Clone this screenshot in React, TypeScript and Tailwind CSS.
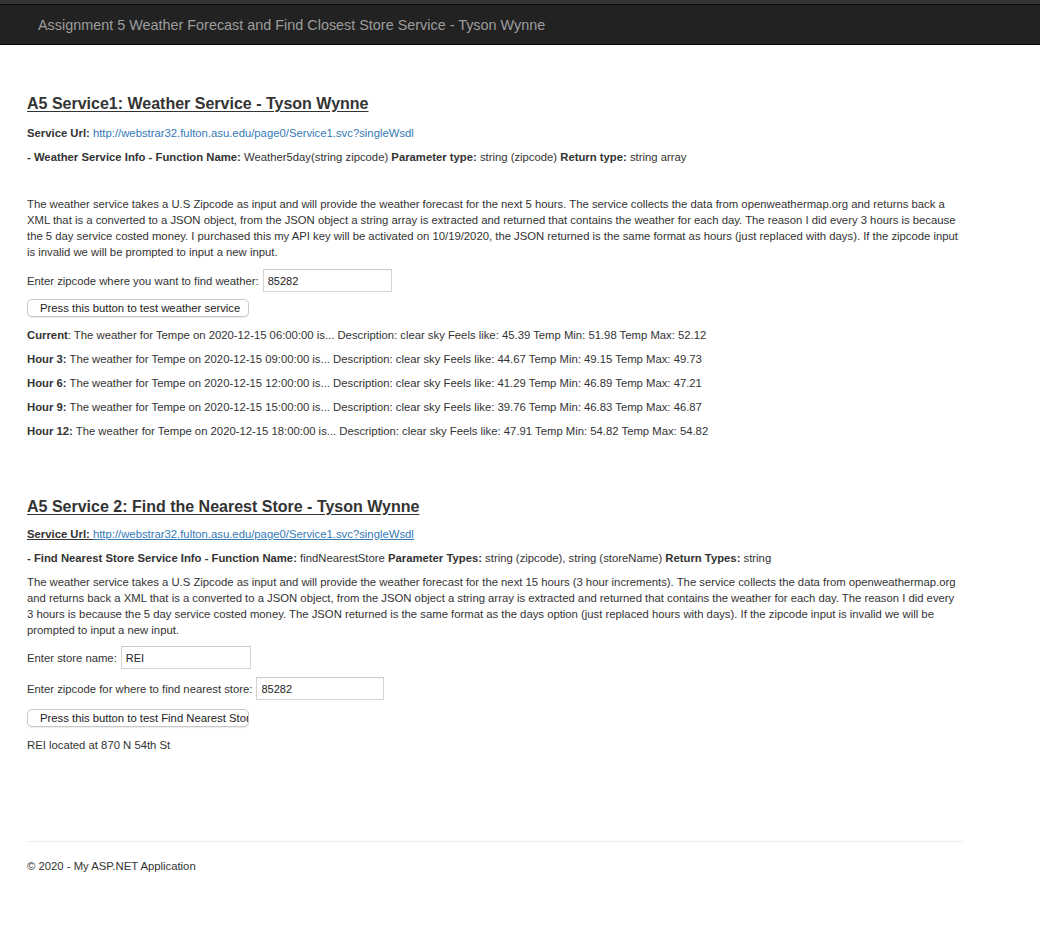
import React from "react";

const url = "http://webstrar32.fulton.asu.edu/page0/Service1.svc?singleWsdl";

const forecast = [
  { label: "Current", colon: false, time: "06:00:00", feels: "45.39", min: "51.98", max: "52.12" },
  { label: "Hour 3:", colon: true, time: "09:00:00", feels: "44.67", min: "49.15", max: "49.73" },
  { label: "Hour 6:", colon: true, time: "12:00:00", feels: "41.29", min: "46.89", max: "47.21" },
  { label: "Hour 9:", colon: true, time: "15:00:00", feels: "39.76", min: "46.83", max: "46.87" },
  { label: "Hour 12:", colon: true, time: "18:00:00", feels: "47.91", min: "54.82", max: "54.82" },
];

function TextBox({ value, className }: { value: string; className: string }) {
  return (
    <input
      readOnly
      value={value}
      className={`h-[23px] border border-[#d4d4d4] border-t-[#c8c8c8] bg-white px-[4px] text-[11px] text-[#222] outline-none ${className}`}
    />
  );
}

function Btn({ children }: { children: React.ReactNode }) {
  return (
    <button className="h-[18px] w-[222px] overflow-hidden whitespace-nowrap rounded-[5px] border border-[#c9c9c9] bg-white pl-[12px] text-left text-[11.3px] leading-[16px] text-[#222] shadow-[0_1px_1px_rgba(0,0,0,0.08)]">
      {children}
    </button>
  );
}

export default function App() {
  return (
    <div className="min-h-[946px] bg-white font-['Liberation_Sans',Arial,sans-serif] text-[11.3px] leading-[16px] text-[#333]">
      <header className="border-t-[4px] border-[#333]">
        <div className="h-[41px] border-y border-y-[#080808] bg-[#222]">
          <div className="pl-[38px] pt-[10px] text-[14.4px] leading-[20px] text-[#9d9d9d]">
            Assignment 5 Weather Forecast and Find Closest Store Service - Tyson Wynne
          </div>
        </div>
      </header>

      <main className="w-[963px] pl-[27px]">
        {/* Service 1 */}
        <h2 className="mt-[48px] text-[16px] font-bold leading-[22px] text-[#333] underline underline-offset-[2px]">
          A5 Service1: Weather Service - Tyson Wynne
        </h2>
        <p className="mt-[10px]">
          <b>Service Url: </b>
          <a className="text-[#337ab7]">{url}</a>
        </p>
        <p className="mt-[8px]">
          <b>- Weather Service Info - Function Name: </b>Weather5day(string zipcode) <b>Parameter type: </b>string
          (zipcode) <b>Return type: </b>string array
        </p>
        <p className="mt-[31px] w-[936px]">
          The weather service takes a U.S Zipcode as input and will provide the weather forecast for the next 5 hours.
          The service collects the data from openweathermap.org and returns back a XML that is a converted to a JSON
          object, from the JSON object a string array is extracted and returned that contains the weather for each day.
          The reason I did every 3 hours is because the 5 day service costed money. I purchased this my API key will be
          activated on 10/19/2020, the JSON returned is the same format as hours (just replaced with days). If the
          zipcode input is invalid we will be prompted to input a new input.
        </p>
        <div className="mt-[9px] flex items-center gap-[4px]">
          <span>Enter zipcode where you want to find weather:</span>
          <TextBox value="85282" className="w-[129px]" />
        </div>
        <div className="mt-[7px]">
          <Btn>Press this button to test weather service</Btn>
        </div>
        <div className="mt-[10px] flex flex-col gap-[8px]">
          {forecast.map((f) => (
            <p key={f.label}>
              {f.colon ? <b>{f.label}</b> : <><b>{f.label}</b>:</>} The weather for Tempe on 2020-12-15 {f.time} is...
              Description: clear sky Feels like: {f.feels} Temp Min: {f.min} Temp Max: {f.max}
            </p>
          ))}
        </div>

        {/* Service 2 */}
        <h2 className="mt-[57px] text-[16px] font-bold leading-[22px] text-[#333] underline underline-offset-[2px]">
          A5 Service 2: Find the Nearest Store - Tyson Wynne
        </h2>
        <p className="mt-[8px] underline">
          <b>Service Url: </b>
          <a className="text-[#337ab7]">{url}</a>
        </p>
        <p className="mt-[8px]">
          <b>- Find Nearest Store Service Info - Function Name: </b>findNearestStore <b>Parameter Types: </b>string
          (zipcode), string (storeName) <b>Return Types: </b>string
        </p>
        <p className="mt-[8px] w-[936px]">
          The weather service takes a U.S Zipcode as input and will provide the weather forecast for the next 15 hours
          (3 hour increments). The service collects the data from openweathermap.org and returns back a XML that is a
          converted to a JSON object, from the JSON object a string array is extracted and returned that contains the
          weather for each day. The reason I did every 3 hours is because the 5 day service costed money. The JSON
          returned is the same format as the days option (just replaced hours with days). If the zipcode input is
          invalid we will be prompted to input a new input.
        </p>
        <div className="mt-[8px] flex items-center gap-[4px]">
          <span>Enter store name:</span>
          <TextBox value="REI" className="w-[130px]" />
        </div>
        <div className="mt-[8px] flex items-center gap-[4px]">
          <span>Enter zipcode for where to find nearest store:</span>
          <TextBox value="85282" className="w-[128px]" />
        </div>
        <div className="mt-[9px]">
          <Btn>Press this button to test Find Nearest Store</Btn>
        </div>
        <p className="mt-[10px]">REI located at 870 N 54th St</p>

        <hr className="mt-[88px] w-[936px] border-t border-[#eee]" />
        <footer className="mt-[16px]">
          <p>© 2020 - My ASP.NET Application</p>
        </footer>
      </main>
    </div>
  );
}
